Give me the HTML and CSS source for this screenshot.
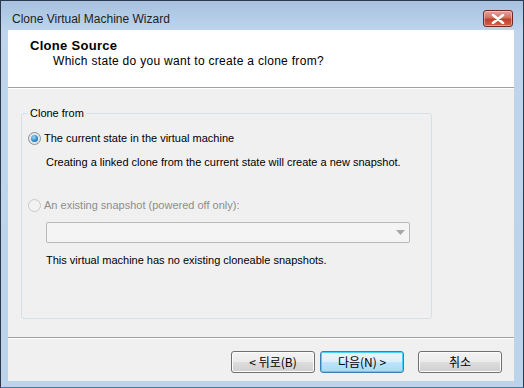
FILE: index.html
```html
<!DOCTYPE html>
<html>
  <head>
    <meta charset="utf-8" />
    <title>Clone Virtual Machine Wizard</title>
    <link rel="stylesheet" href="styles.css">
  </head>
  <body>
    <div class="window">
      <div class="titlebar">
        <span class="title">Clone Virtual Machine Wizard</span>
        <div class="close">
          <svg width="14" height="10" viewBox="0 0 14 10">
            <path d="M2 1 L12 9 M12 1 L2 9" stroke="#fff" stroke-width="2.6" stroke-linecap="round" />
          </svg>
        </div>
      </div>
      <div class="client">
        <div class="header">
          <div class="h-title">Clone Source</div>
          <div class="h-sub">Which state do you want to create a clone from?</div>
        </div>
        <div class="body">
          <fieldset class="group">
            <legend>Clone from</legend>
            <label class="radio-row">
              <span class="radio checked"></span>
              The current state in the virtual machine
            </label>
            <p class="note">Creating a linked clone from the current state will create a new snapshot.</p>
            <label class="radio-row disabled">
              <span class="radio"></span>
              An existing snapshot (powered off only):
            </label>
            <div class="combo">
              <svg width="9" height="5" viewBox="0 0 9 5"><path d="M0 0 H9 L4.5 5 Z" fill="#a8a8a8" /></svg>
            </div>
            <p class="note second">This virtual machine has no existing cloneable snapshots.</p>
          </fieldset>
        </div>
        <div class="footer">
          <button class="btn">&lt; 뒤로(B)</button>
          <button class="btn default">다음(N) &gt;</button>
          <button class="btn cancel">취소</button>
        </div>
      </div>
    </div>
  </body>
</html>
```

FILE: styles.css
```css
* {
  margin: 0;
  padding: 0;
  box-sizing: border-box;
}
body {
  background: #ffffff;
  font-family: "Liberation Sans", Tahoma, sans-serif;
  font-size: 11px;
  color: #000;
}
.window {
  width: 524px;
  height: 388px;
  border: 1px solid #2b3a4a;
  border-bottom-color: #1c8fb0;
  background: linear-gradient(#a7c1df, #bed5ec 30px, #bcd4ea);
  padding: 0 9px 6px 7px;
  display: flex;
  flex-direction: column;
}
.titlebar {
  height: 29px;
  display: flex;
  align-items: flex-start;
  justify-content: space-between;
  padding: 0 1px 0 4px;
}
.title {
  font-family: "Liberation Sans", sans-serif;
  font-size: 12px;
  line-height: 14px;
  margin-top: 11px;
  color: #1e1e1e;
}
.close {
  width: 30px;
  height: 17px;
  margin-top: 9px;
  border: 1px solid #6e2b26;
  border-radius: 3px;
  background: linear-gradient(#e7a597, #d4715c 45%, #c1412a 55%, #d0614c);
  display: flex;
  align-items: center;
  justify-content: center;
  box-shadow: inset 0 0 0 1px rgba(255, 220, 210, 0.5);
}
.client {
  flex: 1;
  background: #f0f0f0;
  display: flex;
  flex-direction: column;
}
.header {
  height: 58px;
  background: #ffffff;
  border-bottom: 1px solid #a0a0a0;
  padding: 8px 0 0 22px;
}
.h-title {
  font-family: "Liberation Sans", sans-serif;
  font-weight: bold;
  font-size: 13px;
  letter-spacing: 0.3px;
  line-height: 15px;
}
.h-sub {
  font-family: "Liberation Sans", sans-serif;
  font-size: 12px;
  letter-spacing: 0.3px;
  padding-left: 23px;
  line-height: 16px;
}
.body {
  flex: 1;
  padding: 18px 82px 0 13px;
  border-top: 1px solid #ffffff;
}
.group {
  height: 212px;
  border: 1px solid #d5dfe5;
  border-radius: 3px;
  padding: 7px 0 0 6px;
}
.group legend {
  margin-left: 0;
  padding: 0 2px;
  line-height: 13px;
}
.radio-row {
  display: flex;
  align-items: center;
  gap: 3px;
  height: 14px;
  margin-top: 4px;
}
.radio-row.disabled {
  color: #8d8d8d;
  margin-top: 29px;
}
.radio {
  width: 13px;
  height: 13px;
  border-radius: 50%;
  border: 1px solid #8f8f8f;
  background: radial-gradient(circle, #f4f4f4, #dcdcdc);
  display: flex;
  align-items: center;
  justify-content: center;
}
.radio.checked::after {
  content: "";
  width: 7px;
  height: 7px;
  border-radius: 50%;
  background: radial-gradient(circle at 40% 35%, #8fe0ff, #1f72b8 70%, #17507f);
}
.disabled .radio {
  border-color: #cacaca;
  background: #f2f2f2;
}
.note {
  margin: 10px 0 0 18px;
  line-height: 14px;
}
.note.second {
  margin-top: 10px;
}
.combo {
  margin: 10px 21px 0 18px;
  height: 21px;
  border: 1px solid #b9b9b9;
  border-radius: 2px;
  background: #f4f4f4;
  display: flex;
  align-items: center;
  justify-content: flex-end;
  padding-right: 4px;
}
.footer {
  height: 44px;
  border-top: 1px solid #a0a0a0;
  box-shadow: inset 0 1px 0 #ffffff;
  display: flex;
  justify-content: flex-end;
  align-items: flex-start;
  padding: 13px 12px 0 0;
  margin-top: 13px;
}
.btn {
  width: 84px;
  height: 22px;
  border: 1px solid #707070;
  border-radius: 3px;
  background: linear-gradient(#f2f2f2, #ebebeb 50%, #dddddd 51%, #cfcfcf);
  box-shadow: inset 0 0 0 1px #fcfcfc;
  font-family: "Noto Sans CJK KR", "DejaVu Sans", sans-serif;
  font-size: 12px;
  line-height: 18px;
  color: #000;
  margin-left: 5px;
}
.btn.default {
  border-color: #3c7fb1;
  box-shadow: inset 0 0 0 1px #48d3f8;
  background: linear-gradient(#eaf6fd, #d9f0fc 50%, #bee6fd 51%, #a7d9f5);
}
.btn.cancel {
  margin-left: 14px;
}
```
